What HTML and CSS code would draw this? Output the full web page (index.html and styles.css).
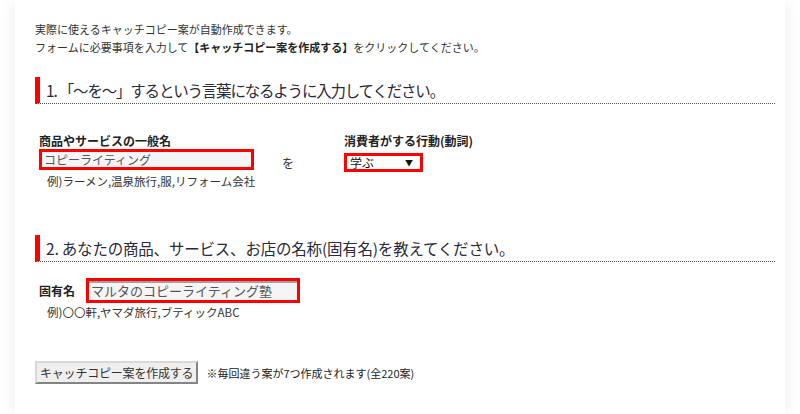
FILE: index.html
```html
<!DOCTYPE html>
<html lang="ja">
<head>
  <meta charset="UTF-8" />
  <title>キャッチコピー自動作成</title>
  <link rel="stylesheet" href="styles.css">
</head>
<body>
  <div class="page">
    <p class="intro">
      実際に使えるキャッチコピー案が自動作成できます。<br>
      フォームに必要事項を入力して<b>【キャッチコピー案を作成する】</b>をクリックしてください。
    </p>

    <!-- 1. 一般名と動詞 -->
    <h2 class="step step-1">1. 「～を～」するという言葉になるように入力してください。</h2>
    <div class="row">
      <div class="col col-name">
        <div class="label">商品やサービスの一般名</div>
        <input type="text" class="field field-general" value="コピーライティング">
        <div class="hint">例)ラーメン,温泉旅行,服,リフォーム会社</div>
      </div>
      <div class="col col-wo">を</div>
      <div class="col">
        <div class="label">消費者がする行動(動詞)</div>
        <span class="select-wrap">
          <select class="verb">
            <option>学ぶ</option>
          </select>
          <span class="arrow">▼</span>
        </span>
      </div>
    </div>

    <!-- 2. 固有名 -->
    <h2 class="step step-2">2. あなたの商品、サービス、お店の名称(固有名)を教えてください。</h2>
    <div class="proper">
      <span class="label">固有名</span>
      <input type="text" class="field field-proper" value="マルタのコピーライティング塾">
    </div>
    <div class="hint hint-proper">例)〇〇軒,ヤマダ旅行,ブティックABC</div>

    <div class="submit">
      <button type="button" class="make-btn">キャッチコピー案を作成する</button>
      <span class="note">※毎回違う案が7つ作成されます(全220案)</span>
    </div>
  </div>
</body>
</html>
```

FILE: styles.css
```css
html, body {
  margin: 0;
  padding: 0;
  background: #fff;
  color: #333;
  font-family: "Noto Sans CJK JP", "Liberation Sans", sans-serif;
}

.page {
  width: 770px;
  min-height: 414px;
  margin: 0 auto;
  padding: 20px 10px 0 20px;
  box-sizing: border-box;
  background: #fff;
  box-shadow: 0 0 16px rgba(0, 0, 0, 0.08);
}

.intro {
  margin: 0;
  font-size: 11px;
  line-height: 18px;
}

.intro b {
  color: #222;
}

/* 見出し */
.step {
  margin: 21px 0 0;
  height: 26px;
  line-height: 26px;
  padding-left: 6px;
  border-left: 5px solid #f00;
  border-bottom: 1px dotted #555;
  font-size: 15.5px;
  font-weight: normal;
  color: #2a2a3a;
}

.step-1 {
  letter-spacing: -1.2px;
}

.step-2 {
  margin-top: 47px;
  letter-spacing: -0.2px;
}

.row {
  display: flex;
  padding: 29px 0 0 4px;
}

.col-name {
  width: 243px;
}

.col-wo {
  width: 62px;
  padding-top: 21px;
  font-size: 12px;
}

.label {
  font-size: 12px;
  font-weight: bold;
  line-height: 16px;
  color: #222;
}

.field {
  display: block;
  box-sizing: border-box;
  margin: 0;
  border: 3px solid #f00;
  background: #f5f5f5;
  color: #555;
  font-family: inherit;
  font-size: 12px;
  padding: 0 2px;
  outline: none;
}

.field-general {
  width: 215px;
  height: 21px;
}

.select-wrap {
  position: relative;
  display: inline-block;
}

.verb {
  display: block;
  width: 79px;
  height: 19px;
  border: 3px solid #f00;
  border-radius: 0;
  background: #fff;
  padding: 0 3px;
  color: #111;
  font-family: inherit;
  font-size: 12px;
  line-height: 13px;
  appearance: none;
  -webkit-appearance: none;
  outline: none;
}

.arrow {
  position: absolute;
  right: 10px;
  top: 4px;
  font-size: 8px;
  color: #111;
  pointer-events: none;
}

.hint {
  margin-top: 5px;
  padding-left: 8px;
  font-size: 11.5px;
  line-height: 13px;
  color: #333;
}

.proper {
  display: flex;
  align-items: center;
  gap: 11px;
  padding: 16px 0 0 4px;
}

.field-proper {
  width: 214px;
  height: 25px;
  font-size: 13px;
  box-shadow: inset 0 2px 0 #a0a0a0;
}

.hint-proper {
  margin-top: 3px;
  padding-left: 12px;
}

.submit {
  display: flex;
  align-items: center;
  gap: 8px;
  margin-top: 42px;
}

.make-btn {
  height: 23px;
  padding: 0 3px;
  border: 2px outset #d8d8d8;
  background: #efefef;
  color: #333;
  font-family: inherit;
  font-size: 12px;
  letter-spacing: -0.2px;
  line-height: 17px;
}

.note {
  font-size: 11px;
  color: #222;
}
```
